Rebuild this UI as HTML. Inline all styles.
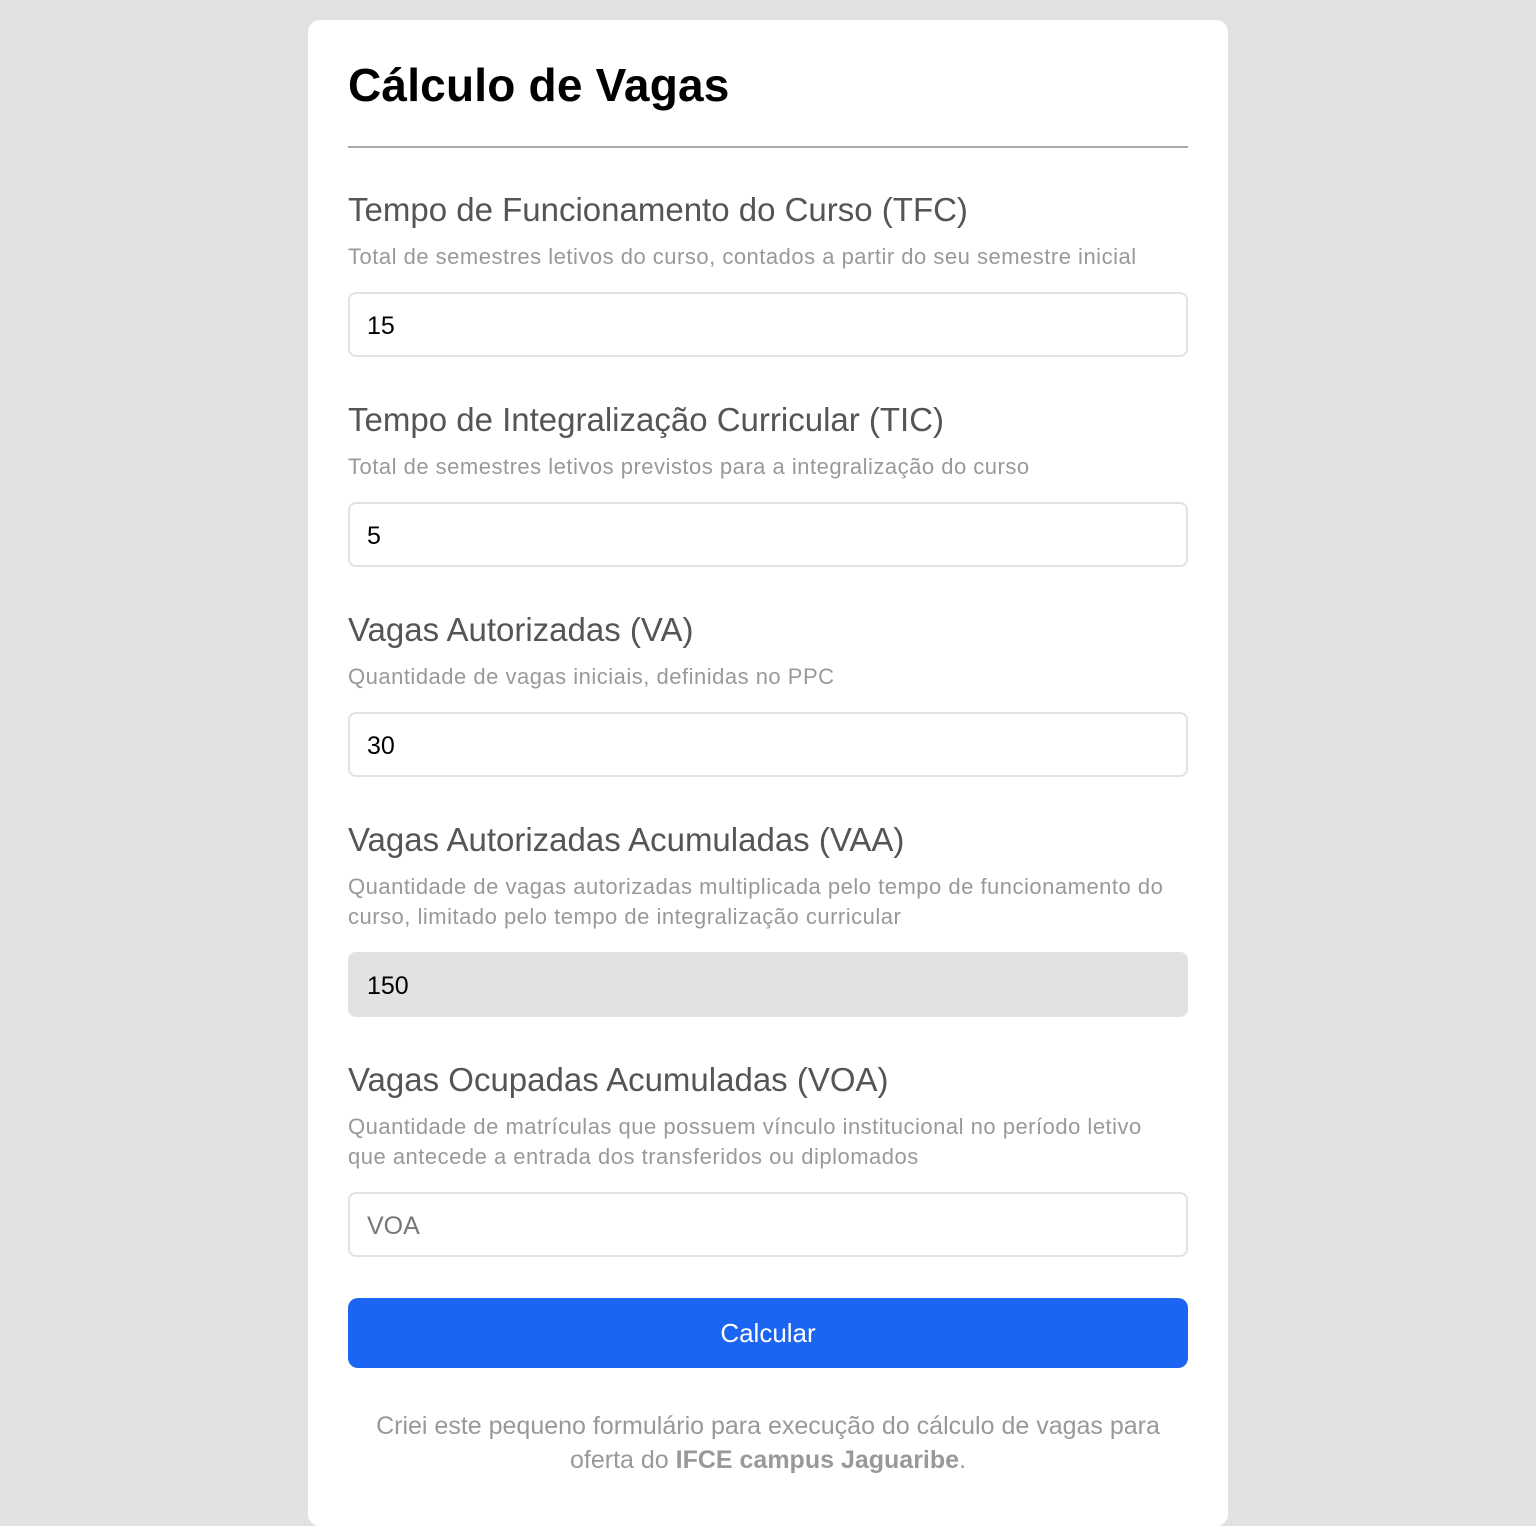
<!DOCTYPE html>
<html><head><meta charset="utf-8"><style>
*{box-sizing:border-box;margin:0;padding:0}
body{background:#e2e2e2;width:1536px;height:1526px;font-family:"Liberation Sans","DejaVu Sans",sans-serif;overflow:hidden;position:relative}
.card{position:absolute;left:308px;top:20px;width:920px;height:1506px;background:#fff;border-radius:12px;padding:0 40px}
h1{position:absolute;left:40px;top:38px;font-size:46px;font-weight:bold;color:#000;letter-spacing:0.2px}
hr{position:absolute;left:40px;top:126px;width:840px;border:0;border-top:2px solid #aaa}
.f{position:absolute;left:40px;width:840px}
.lab{font-size:33px;color:#555;line-height:40px}
.desc{font-size:22px;letter-spacing:0.5px;color:#999;line-height:30px;margin-top:12px}
.in{height:65px;border:2px solid #e2e2e2;border-radius:8px;font-size:25px;color:#000;padding:0 17px;line-height:65px;margin-top:20px}
.in.ro{background:#e2e2e2}
.in.ph{color:#777}
.btn{position:absolute;left:40px;top:1278px;width:840px;height:70px;background:#1c64f2;border-radius:10px;color:#fff;font-size:26px;text-align:center;line-height:70px}
.foot{position:absolute;left:40px;top:1389px;width:840px;text-align:center;font-size:25px;color:#999;line-height:34px}
</style></head><body>
<div class="card">
<h1>Cálculo de Vagas</h1>
<hr>
<div class="f" style="top:170px"><div class="lab">Tempo de Funcionamento do Curso (TFC)</div><div class="desc">Total de semestres letivos do curso, contados a partir do seu semestre inicial</div><div class="in">15</div></div>
<div class="f" style="top:380px"><div class="lab">Tempo de Integralização Curricular (TIC)</div><div class="desc">Total de semestres letivos previstos para a integralização do curso</div><div class="in">5</div></div>
<div class="f" style="top:590px"><div class="lab">Vagas Autorizadas (VA)</div><div class="desc">Quantidade de vagas iniciais, definidas no PPC</div><div class="in">30</div></div>
<div class="f" style="top:800px"><div class="lab">Vagas Autorizadas Acumuladas (VAA)</div><div class="desc">Quantidade de vagas autorizadas multiplicada pelo tempo de funcionamento do<br>curso, limitado pelo tempo de integralização curricular</div><div class="in ro">150</div></div>
<div class="f" style="top:1040px"><div class="lab">Vagas Ocupadas Acumuladas (VOA)</div><div class="desc">Quantidade de matrículas que possuem vínculo institucional no período letivo<br>que antecede a entrada dos transferidos ou diplomados</div><div class="in ph">VOA</div></div>
<div class="btn">Calcular</div>
<div class="foot">Criei este pequeno formulário para execução do cálculo de vagas para<br>oferta do <b>IFCE campus Jaguaribe</b>.</div>
</div>
</body></html>
